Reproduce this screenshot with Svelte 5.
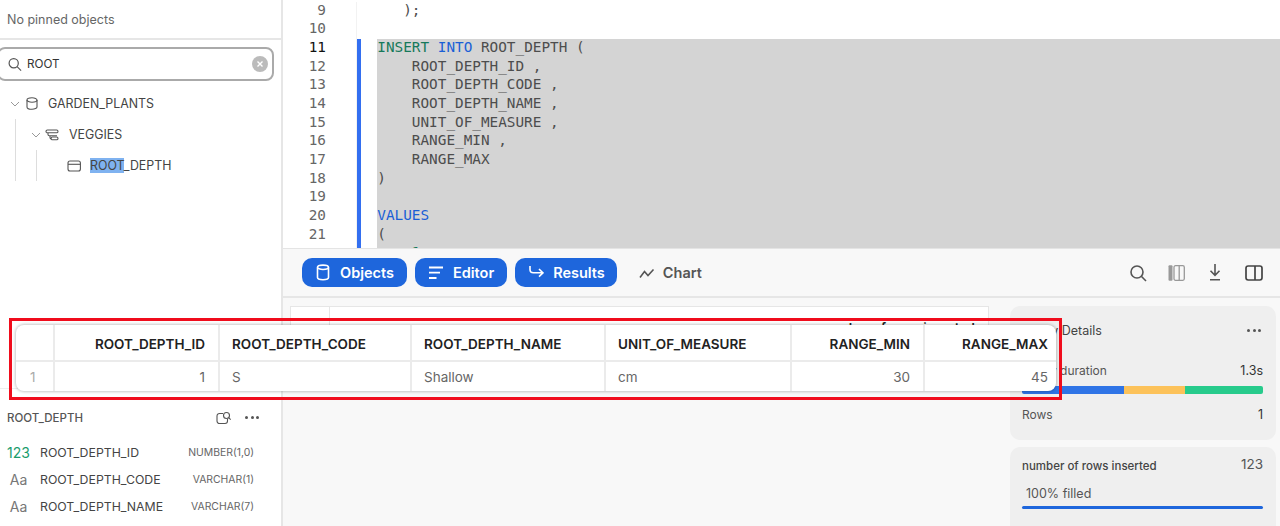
<script>
  const cols = [
    { name: 'ROOT_DEPTH_ID', type: '123', dtype: 'NUMBER(1,0)', green: true },
    { name: 'ROOT_DEPTH_CODE', type: 'Aa', dtype: 'VARCHAR(1)' },
    { name: 'ROOT_DEPTH_NAME', type: 'Aa', dtype: 'VARCHAR(7)' }
  ];
  const lines = [
    { n: 9, t: '   );' },
    { n: 10, t: '' },
    { n: 11, sel: true, cur: true, html: '<span class="g">INSERT</span> <span class="b">INTO</span> ROOT_DEPTH (' },
    { n: 12, sel: true, t: '    ROOT_DEPTH_ID ,' },
    { n: 13, sel: true, t: '    ROOT_DEPTH_CODE ,' },
    { n: 14, sel: true, t: '    ROOT_DEPTH_NAME ,' },
    { n: 15, sel: true, t: '    UNIT_OF_MEASURE ,' },
    { n: 16, sel: true, t: '    RANGE_MIN ,' },
    { n: 17, sel: true, t: '    RANGE_MAX' },
    { n: 18, sel: true, t: ')' },
    { n: 19, sel: true, t: '' },
    { n: 20, sel: true, html: '<span class="b">VALUES</span>' },
    { n: 21, sel: true, t: '(' },
    { n: '', sel: true, html: '    <span class="g">1</span>' }
  ];
</script>

<div class="app">
  <aside class="side">
    <div class="pinned">No pinned objects</div>
    <div class="search">
      <svg width="15" height="15" viewBox="0 0 15 15" fill="none" stroke="#555" stroke-width="1.2"><circle cx="6.7" cy="6.2" r="4.6"/><path d="M10.100 9.600l4 4"/></svg>
      <span class="q">ROOT</span>
      <span class="clear"><svg width="8" height="8" viewBox="0 0 8 8" stroke="#fff" stroke-width="1.4"><path d="M1.500 1.500l5 5M6.500 1.500l-5 5"/></svg></span>
    </div>
    <div class="tree">
      <div class="node n0">
        <svg class="chev" width="10" height="6" viewBox="0 0 10 6" fill="none" stroke="#999" stroke-width="1"><path d="M1 1l4 4 4-4"/></svg>
        <svg width="12" height="13" viewBox="0 0 12 13" fill="none" stroke="#555" stroke-width="1.1"><path d="M1 3v7c0 1.200 2.200 2.300 5 2.300s5-1.100 5-2.300V3"/><ellipse cx="6" cy="3" rx="5" ry="2.200"/></svg>
        <span>GARDEN_PLANTS</span>
      </div>
      <div class="sub s1">
        <div class="node n1">
          <svg class="chev" width="10" height="6" viewBox="0 0 10 6" fill="none" stroke="#999" stroke-width="1"><path d="M1 1l4 4 4-4"/></svg>
          <svg width="14" height="12" viewBox="0 0 14 12" fill="none" stroke="#555" stroke-width="1.1"><rect x="1" y="1" width="12" height="2.800" rx="1.400"/><path d="M3 4v1.500c0 .8.5 1.200 1.300 1.200H12M5 7v1.500c0 .8.5 1.300 1.300 1.300"/><rect x="6" y="8" width="7" height="2.800" rx="1.400"/></svg>
          <span>VEGGIES</span>
        </div>
        <div class="sub s2">
          <div class="node n2">
            <svg width="14" height="12" viewBox="0 0 14 12" fill="none" stroke="#555" stroke-width="1.1"><rect x="1" y="1" width="12.400" height="10" rx="2"/><path d="M1 4.300h12.400"/></svg>
            <span><mark>ROOT</mark>_DEPTH</span>
          </div>
        </div>
      </div>
    </div>
    <div class="spacer"></div>
    <div class="details">
      <div class="dhead">
        <span>ROOT_DEPTH</span>
        <svg class="dq" width="16" height="14" viewBox="0 0 16 14" fill="none" stroke="#555" stroke-width="1.1"><path d="M7 2.500H3.500A2.500 2.500 0 0 0 1 5v5a2.500 2.500 0 0 0 2.500 2.500H9A2.500 2.500 0 0 0 11.500 10V8"/><circle cx="10.500" cy="4.500" r="3"/><path d="M12.700 6.700l2 2"/></svg>
        <span class="dots"><i></i><i></i><i></i></span>
      </div>
      {#each cols as c}
        <div class="col">
          <span class="ty" class:green={c.green}>{c.type}</span>
          <span class="cn">{c.name}</span>
          <span class="dt">{c.dtype}</span>
        </div>
      {/each}
    </div>
  </aside>

  <main class="main">
    <section class="editor">
      <div class="gutter">
        {#each lines as l}
          <div class="ln" class:cur={l.cur}>{l.n}</div>
        {/each}
      </div>
      <div class="mark">
        {#each lines as l}
          <div class="mk" class:on={l.sel}></div>
        {/each}
      </div>
      <div class="code">
        {#each lines as l}
          <div class="cl" class:sel={l.sel}>{#if l.html}{@html l.html}{:else}{l.t}{/if}</div>
        {/each}
      </div>
    </section>

    <section class="lower">
      <div class="tabs">
        <button class="tab on">
          <svg width="14" height="17" viewBox="0 0 14 17" fill="none" stroke="#fff" stroke-width="1.6"><path d="M1.500 3.500v10c0 1.200 2.200 2.200 5.500 2.200s5.500-1 5.500-2.200v-10"/><ellipse cx="7" cy="3.300" rx="5.500" ry="2.200"/></svg>
          Objects
        </button>
        <button class="tab on">
          <svg width="14" height="14" viewBox="0 0 14 14" fill="none" stroke="#fff" stroke-width="1.8"><path d="M0 1.500h14M0 6.700h11M0 12h7.500"/></svg>
          Editor
        </button>
        <button class="tab on res">
          <svg width="15" height="14" viewBox="0 0 15 14" fill="none" stroke="#fff" stroke-width="1.6"><path d="M1 0v3.500c0 2 1.300 3.300 3.300 3.300H14M10 3l4 3.800-4 3.800"/></svg>
          Results
        </button>
        <button class="tab chart">
          <svg width="16" height="12" viewBox="0 0 16 12" fill="none" stroke="#555" stroke-width="1.6"><path d="M1 10.500l4.500-6 3.500 4 5.500-6"/></svg>
          Chart
        </button>
        <div class="tools">
          <svg width="18" height="18" viewBox="0 0 18 18" fill="none" stroke="#555" stroke-width="1.6"><circle cx="8" cy="8" r="6"/><path d="M12.300 12.300l4.700 4.700"/></svg>
          <svg width="17" height="16" viewBox="0 0 17 16" fill="none" stroke="#999" stroke-width="1.3"><rect x="6" y=".7" width="10.300" height="14.600" rx="1.500"/><path d="M11.200 1v14"/><rect x=".5" y=".2" width="4" height="15.600" rx="1" fill="#999" stroke="none"/></svg>
          <svg width="18" height="17" viewBox="0 0 18 17" fill="none" stroke="#555" stroke-width="1.6"><path d="M9 0v11M4.500 6.800L9 11.300l4.500-4.500M4 15.800h10"/></svg>
          <svg width="18" height="16" viewBox="0 0 18 16" fill="none" stroke="#444" stroke-width="1.700"><rect x="1" y="1" width="16" height="14" rx="2.200"/><path d="M10 1v14"/></svg>
        </div>
      </div>
      <div class="results">
        <div class="bgtable">
          <div class="bgnum"></div>
          <div class="bghead">number of rows inserted</div>
        </div>
        <div class="panels">
          <div class="card info">
            <div class="ctitle"><span>Query Details</span><span class="dots"><i></i><i></i><i></i></span></div>
            <div class="kv kvd"><span>Query duration</span><span class="v">1.3s</span></div>
            <div class="bar"><i class="b1"></i><i class="b2"></i><i class="b3"></i></div>
            <div class="kv kvr"><span>Rows</span><span class="v">1</span></div>
          </div>
          <div class="card stat">
            <div class="kv"><span class="sname">number of rows inserted</span><span class="v big">123</span></div>
            <div class="filled">100% filled</div>
            <div class="fbar"></div>
          </div>
        </div>
      </div>
    </section>
  </main>

  <div class="overlay">
    <div class="row head">
      <div class="c"></div>
      <div class="c r">ROOT_DEPTH_ID</div>
      <div class="c">ROOT_DEPTH_CODE</div>
      <div class="c">ROOT_DEPTH_NAME</div>
      <div class="c">UNIT_OF_MEASURE</div>
      <div class="c r">RANGE_MIN</div>
      <div class="c r">RANGE_MAX</div>
    </div>
    <div class="row body">
      <div class="c idx">1</div>
      <div class="c r">1</div>
      <div class="c">S</div>
      <div class="c">Shallow</div>
      <div class="c">cm</div>
      <div class="c r">30</div>
      <div class="c r">45</div>
    </div>
  </div>
  <div class="redbox"></div>
</div>

<style>
  :global(body) { margin: 0; background: #fff; }
  .app { position: relative; display: flex; width: 1280px; height: 526px; overflow: hidden; font-family: Inter, "Liberation Sans", sans-serif; color: #333; }

  .side { width: 281px; flex: none; display: flex; flex-direction: column; border-right: 2px solid #e6e6e6; background: #fff; }
  .pinned { height: 40px; flex: none; box-sizing: border-box; padding: 12px 0 0 7px; font-size: 12.500px; line-height: 16px; color: #666; border-bottom: 2px solid #e6e6e6; }
  .search { margin: 7px 0 0 -3px; width: 277px; height: 34px; box-sizing: border-box; border: 2px solid #aaa; border-radius: 8px; display: flex; align-items: center; padding: 0 4px 0 8px; gap: 5px; flex: none; }
  .q { font-size: 11.700px; color: #333; flex: 1; }
  .clear { width: 16px; height: 16px; border-radius: 50%; background: #bbb; display: flex; align-items: center; justify-content: center; }
  .tree { padding-top: 7px; font-size: 12.400px; color: #444; }
  .node { height: 31px; display: flex; align-items: center; gap: 5px; }
  .node .chev { margin-right: 1px; }
  .n0 { padding-left: 10px; }
  .n0 span { margin-left: 5px; }
  .n1 { padding-left: 15px; gap: 4px; }
  .n1 .chev { margin-right: 0; }
  .n1 span { margin-left: 6px; }
  .n2 { padding-left: 30px; }
  .n2 span { margin-left: 4px; }
  .sub { margin-left: 15px; border-left: 1px solid #ddd; }
  .s2 { margin-left: 20px; }
  mark { background: #7fb2f0; color: inherit; }
  .spacer { flex: 1; }
  .details { height: 138px; flex: none; box-sizing: border-box; padding: 0 0 0 7px; border-top: 1px solid #eee; }
  .dhead { display: flex; align-items: center; height: 29px; margin-top: 14px; font-size: 11.500px; font-weight: 500; color: #555; }
  .dhead > span:first-child { flex: 1; }
  .dq { margin-right: 13px; }
  .dots { display: inline-flex; gap: 2.500px; margin-right: 22px; }
  .dots i { width: 3px; height: 3px; border-radius: 50%; background: #555; }
  .col { height: 27px; display: flex; align-items: center; font-size: 12.300px; color: #444; }
  .col:nth-of-type(2) { margin-top: 7px; }
  .ty { width: 23px; padding-right: 10px; font-size: 14px; color: #777; text-align: center; }
  .ty.green { color: #1a9c6c; }
  .cn { flex: 1; }
  .dt { font-size: 10.400px; color: #666; margin-right: 27px; }

  .main { flex: 1; min-width: 0; display: flex; flex-direction: column; }
  .editor { height: 248px; flex: none; overflow: hidden; display: flex; padding-top: 1.670px; box-sizing: border-box; font-family: "DejaVu Sans Mono", "Liberation Mono", monospace; font-size: 14.350px; background: #fff; }
  .gutter { width: 43px; flex: none; text-align: right; color: #666; }
  .ln, .cl, .mk { height: 18.670px; line-height: 16.670px; white-space: pre; }
  .ln.cur { color: #111; }
  .mark { margin-left: 30px; width: 21px; flex: none; box-sizing: border-box; border-left: 1px solid #f2f2f2; }
  .mk.on { width: 4px; background: #336ff0; }
  .code { flex: 1; color: #4d4d4d; }
  .cl { padding-left: 0.300px; }
  .cl.sel { background: #d4d4d4; }
  :global(.cl .g) { color: #16795a; }
  :global(.cl .b) { color: #1a5fd6; }

  .lower { flex: 1; background: #f8f8f8; border-top: 1px solid #e4e4e4; display: flex; flex-direction: column; min-height: 0; }
  .tabs { height: 49px; flex: none; display: flex; align-items: center; gap: 8px; padding: 0 17px 0 19px; border-bottom: 2px solid #e6e6e6; box-sizing: border-box; }
  .tab { height: 29px; border: 0; border-radius: 10px; padding: 0 13px 0 14px; display: flex; align-items: center; gap: 10px; font: 600 14.500px Inter, sans-serif; flex: none; }
  .tab.on { background: #1e66dc; color: #fff; }
  .tab.res { gap: 9px; padding-right: 12px; }
  .tab.chart { background: none; color: #555; margin-left: 14px; padding: 0; gap: 8px; }
  .tools { margin-left: auto; display: flex; align-items: center; gap: 21px; }
  .results { flex: 1; display: flex; justify-content: space-between; min-height: 0; padding-top: 8px; }
  .bgtable { margin-left: 7px; width: 699px; height: 70px; flex: none; display: flex; background: #fff; border: 1px solid #e6e6e6; box-sizing: border-box; }
  .bgnum { width: 38px; border-right: 1px solid #e6e6e6; }
  .bghead { flex: 1; text-align: right; padding: 13px 13px 0; font-size: 13px; font-weight: 600; color: #222; }
  .panels { width: 266px; margin-right: 4px; flex: none; display: flex; flex-direction: column; gap: 7px; }
  .card { background: #efefef; border-radius: 10px; box-sizing: border-box; padding: 0 13px 0 12px; font-size: 12px; flex: none; }
  .info { height: 134px; }
  .stat { height: 90px; padding-top: 8px; }
  .ctitle { display: flex; justify-content: space-between; align-items: center; height: 49px; font-size: 12.500px; color: #444; }
  .ctitle .dots { margin-right: 2px; }
  .kv { display: flex; justify-content: space-between; color: #555; align-items: center; font-size: 12px; }
  .kvd { margin-top: 5px; height: 20px; }
  .kvr { margin-top: 11px; height: 18px; }
  .v { color: #333; font-size: 12.500px; }
  .big { font-size: 13.500px; color: #555; }
  .sname { font-size: 11.500px; font-weight: 500; color: #444; padding-top: 4px; }
  .bar { display: flex; height: 8px; margin-top: 6px; border-radius: 2px; overflow: hidden; }
  .bar i { display: block; }
  .b1 { width: 102px; background: #2f74e6; }
  .b2 { width: 61px; background: #fcc25a; }
  .b3 { flex: 1; background: #27cb8c; }
  .filled { font-size: 12.500px; line-height: 15px; color: #555; padding: 13px 4px 0; }
  .fbar { height: 3px; margin-top: 5px; background: #1e66dc; border-radius: 2px; }

  .overlay { position: absolute; left: 16px; top: 325px; width: 1040px; height: 66px; background: #fff; border-radius: 8px; box-shadow: 0 0 3px 1px rgba(0,0,0,.22); overflow: hidden; }
  .row { display: grid; grid-template-columns: 37px 165px 192px 194px 186px 133px 133px; }
  .head { height: 37px; font-size: 13.500px; font-weight: 600; color: #222; border-bottom: 2px solid #ebebeb; box-sizing: border-box; }
  .head .c { padding-top: 2px; }
  .body { height: 29px; font-size: 13.500px; color: #666; }
  .c { border-left: 2px solid #ebebeb; padding: 0 13px 0 12px; display: flex; align-items: center; white-space: nowrap; box-sizing: border-box; }
  .c:first-child { border-left: 0; }
  .c:last-child { padding-right: 8px; }
  .r { justify-content: flex-end; }
  .idx { color: #aaa; padding: 0 0 0 14px; }
  .redbox { position: absolute; left: 9px; top: 318px; width: 1053px; height: 82px; box-sizing: border-box; border: 3px solid #f00c1c; }
</style>
